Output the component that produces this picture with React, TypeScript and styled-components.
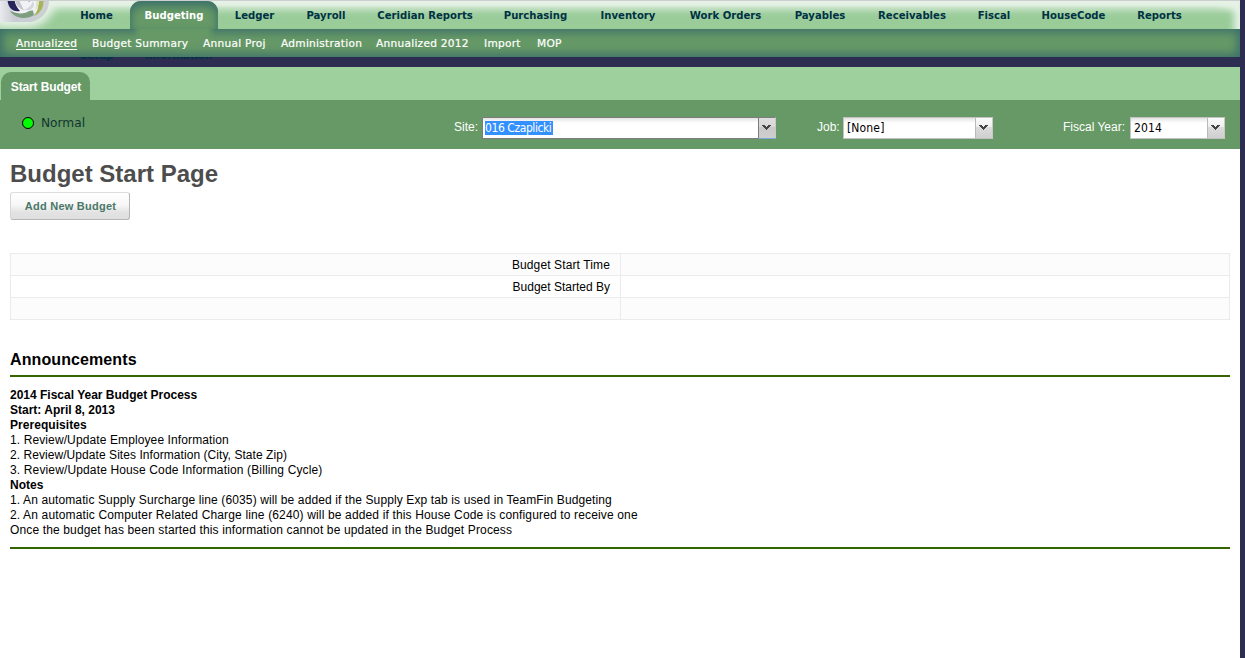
import React from "react";
import styled, { createGlobalStyle, css } from "styled-components";

const GlobalStyle = createGlobalStyle`
  * { box-sizing: border-box; }
  body { margin: 0; background: #fff; font-family: "Liberation Sans", Arial, sans-serif; font-size: 12px; color: #000; overflow: hidden; }
  svg { display: block; }
`;

const Shell = styled.div`
  width: 100%;
  height: 658px;
  padding-right: 5px;
  background: #2c2d50;
`;
const Page = styled.div`
  height: 100%;
  background: #fff;
`;

const TopNav = styled.nav`
  position: relative;
  display: flex;
  height: 29px;
  padding-left: 64px;
  overflow: hidden;
  border-top: 1px solid #cbcfd0;
  background: linear-gradient(#e6f2e6 0, #e2f0e2 4px, #bcddbc 8px, #9fcf9f 13px, #99cc99 17px);
`;
const RightGlow = styled.div`
  position: absolute;
  right: 0;
  top: 0;
  width: 34px;
  height: 60px;
  border-top-right-radius: 9px;
  box-shadow: inset -5px 4px 7px 1px #e6f2e6, 0 0 0 8px #eef0f2;
  clip-path: inset(0);
  mask-image: linear-gradient(90deg, transparent 8px, #000 20px);
`;
const LogoPanel = styled.div`
  position: absolute;
  left: 0;
  top: -1px;
  width: 49px;
  height: 22px;
  border-bottom-right-radius: 22px 21px;
  background: linear-gradient(90deg, #e8eaee 0, #c9ccd2 14px, #cdd0d5);
  box-shadow: 0 0 8px 6px #e6f2e6;
`;
const navFont = css`
  font-family: "DejaVu Sans", Verdana, sans-serif;
  font-weight: bold;
  font-size: 10.1px;
  white-space: nowrap;
`;
const NavItem = styled.a<{ $w: number; $active?: boolean }>`
  ${navFont}
  position: relative;
  display: flex;
  justify-content: center;
  flex: none;
  width: ${(p) => p.$w + 32}px;
  height: 29px;
  line-height: 29px;
  color: #003144;
  ${(p) =>
    p.$active &&
    css`
      color: #fff;
      width: ${p.$w + 30}px;
      margin: 0 1px;
      border-radius: 11px 11px 0 0;
      background: #669966;
      box-shadow: inset 0 4px 9px 1px #3c706a;
    `}
`;

const SubNav = styled.nav`
  position: relative;
  display: flex;
  gap: 15px;
  height: 28px;
  padding-left: 16px;
  background: #669966;
  box-shadow: inset 0 0 10px 3px #3c706a;
`;
const Junction = styled.div`
  position: absolute;
  left: 132px;
  top: 0;
  width: 84px;
  height: 14px;
  background: #669966;
  mask-image: linear-gradient(90deg, transparent, #000 9px, #000 75px, transparent);
`;
const SubItem = styled.a<{ $w: number; $active?: boolean }>`
  position: relative;
  display: flex;
  flex: none;
  width: ${(p) => p.$w}px;
  font-family: "DejaVu Sans", Verdana, sans-serif;
  font-size: 10.6px;
  letter-spacing: 0.26px;
  line-height: 29px;
  white-space: nowrap;
  color: #fff;
  -webkit-text-stroke: 0.2px #fff;
  text-decoration: ${(p) => (p.$active ? "underline" : "none")};
  text-underline-offset: 2px;
`;

const Strip = styled.div`
  display: flex;
  height: 10px;
  padding-left: 64px;
  overflow: hidden;
  background: #2c2d50;
`;
const WrappedItem = styled.span<{ $w: number }>`
  ${navFont}
  width: ${(p) => p.$w + 32}px;
  padding-left: 16px;
  margin-top: -7px;
  line-height: 12px;
  color: #003144;
`;

const TabBar = styled.div`
  display: flex;
  align-items: flex-end;
  height: 33px;
  padding-left: 1px;
  background: #9ed09e;
`;
const Tab = styled.div`
  width: 89px;
  height: 28px;
  padding-left: 1px;
  border-radius: 10px 10px 0 0;
  background: #669966;
  color: #fff;
  font-weight: bold;
  letter-spacing: -0.13px;
  line-height: 30px;
  text-align: center;
  white-space: nowrap;
`;
const FilterBar = styled.div`
  display: flex;
  height: 49px;
  background: #669966;
`;
const Status = styled.div`
  display: flex;
  align-items: center;
  flex: none;
  gap: 7px;
  width: 454px;
  height: 46px;
  padding-left: 22px;
  font-family: "DejaVu Sans", Verdana, sans-serif;
  font-size: 12.2px;
  color: #11352e;
`;
const Light = styled.i`
  width: 12px;
  height: 12px;
  border: 1px solid #000;
  border-radius: 50%;
  background: #00ff00;
`;
const Field = styled.label<{ $label: number; $gap: number }>`
  display: grid;
  grid-template-columns: ${(p) => p.$label}px auto;
  align-items: start;
  flex: none;
  margin-right: ${(p) => p.$gap}px;
  padding-top: 17px;
  line-height: 20px;
  color: #fff;
  white-space: nowrap;
`;
const Select = styled.span<{ $w: number; $focus?: boolean }>`
  display: flex;
  width: ${(p) => p.$w}px;
  height: 22px;
  border: 1px solid ${(p) => (p.$focus ? "#7c7c7c" : "#c2c2c2")};
  border-right-color: #c9c9c9;
  background: linear-gradient(#e4e4e4, #fff 5px);
`;
const Value = styled.span<{ $sel?: boolean }>`
  flex: 1;
  padding: 3px 0 0 ${(p) => (p.$sel ? 2 : 3)}px;
  font-family: "DejaVu Sans Condensed", "DejaVu Sans", Tahoma, sans-serif;
  font-stretch: condensed;
  font-size: 12px;
  line-height: 14px;
  letter-spacing: 0.15px;
  color: #000;
  span {
    display: inline-block;
    ${(p) => p.$sel && "background: #3390ff; color: #fff; width: 68px; letter-spacing: -0.42px;"}
  }
`;
const Trigger = styled.span<{ $focus?: boolean }>`
  display: flex;
  align-items: center;
  justify-content: center;
  width: 17px;
  padding-right: 2px;
  padding-bottom: 1px;
  margin: ${(p) => (p.$focus ? "0 0 -1px" : "0")};
  border-left: 1px solid ${(p) => (p.$focus ? "#7c7c7c" : "#b9b9b9")};
  border-bottom: ${(p) => (p.$focus ? "1px solid #7fa6d8" : "0")};
  background: ${(p) =>
    p.$focus
      ? "linear-gradient(#dedede, #d8d8d8 45%, #c8c8c8 46%, #cfcfcf)"
      : "linear-gradient(#fafafa, #eeeeee 45%, #dcdcdc 46%, #cfcfcf)"};
`;

const Content = styled.main`
  padding: 10px 10px 0;
`;
const Title = styled.h1`
  margin: 0;
  font-size: 24px;
  line-height: 29px;
  color: #4d4d4d;
`;
const Button = styled.button`
  display: block;
  width: 120px;
  height: 28px;
  margin-top: 4px;
  padding: 0;
  border: 1px solid #b5b5b5;
  border-top-color: #dddddd;
  border-left-color: #d6d6d6;
  border-radius: 3px;
  background: linear-gradient(#fff 0, #f7f7f7 45%, #e2e2e2 75%, #e0e0e0);
  color: #4a7868;
  font: bold 11px "Liberation Sans", Arial, sans-serif;
  letter-spacing: 0.25px;
  text-indent: 1px;
  white-space: nowrap;
`;
const Table = styled.div`
  margin-top: 33px;
  border: 1px solid #ebebeb;
  border-bottom: 0;
`;
const Row = styled.div<{ $shade?: boolean }>`
  display: grid;
  grid-template-columns: 610px 1fr;
  height: 22px;
  border-bottom: 1px solid #ebebeb;
  background: ${(p) => (p.$shade ? "#fcfcfc" : "#fff")};
`;
const Label = styled.div<{ $ls?: number }>`
  padding-right: 10px;
  border-right: 1px solid #ebebeb;
  letter-spacing: ${(p) => p.$ls || 0}px;
  line-height: 22px;
  text-align: right;
`;
const Heading = styled.h2`
  margin: 29px 0 0;
  height: 28px;
  border-bottom: 2px solid #336600;
  font-size: 16px;
  letter-spacing: 0.1px;
  line-height: 22px;
`;
const Notice = styled.div`
  height: 172px;
  padding-top: 11px;
  border-bottom: 2px solid #336600;
  line-height: 15px;
`;
const Line = styled.div<{ $bold?: boolean; $ls?: number }>`
  font-weight: ${(p) => (p.$bold ? "bold" : "normal")};
  letter-spacing: ${(p) => p.$ls || 0}px;
  white-space: nowrap;
`;

const modules: [string, number][] = [
  ["Home", 33], ["Budgeting", 58], ["Ledger", 39], ["Payroll", 40], ["Ceridian Reports", 94],
  ["Purchasing", 63], ["Inventory", 58], ["Work Orders", 73], ["Payables", 52],
  ["Receivables", 68], ["Fiscal", 32], ["HouseCode", 63], ["Reports", 45],
];
const pages: [string, number][] = [
  ["Annualized", 61], ["Budget Summary", 96], ["Annual Proj", 63], ["Administration", 80],
  ["Annualized 2012", 93], ["Import", 38], ["MOP", 25],
];
const notice: [string, boolean, number][] = [
  ["2014 Fiscal Year Budget Process", true, 0],
  ["Start: April 8, 2013", true, 0],
  ["Prerequisites", true, 0.05],
  ["1. Review/Update Employee Information", false, 0.11],
  ["2. Review/Update Sites Information (City, State Zip)", false, 0.06],
  ["3. Review/Update House Code Information (Billing Cycle)", false, 0.14],
  ["Notes", true, 0],
  ["1. An automatic Supply Surcharge line (6035) will be added if the Supply Exp tab is used in TeamFin Budgeting", false, 0.12],
  ["2. An automatic Computer Related Charge line (6240) will be added if this House Code is configured to receive one", false, 0.148],
  ["Once the budget has been started this information cannot be updated in the Budget Process", false, 0.14],
];

const Logo = () => (
  <svg width="49" height="22" viewBox="0 0 49 22">
    <circle cx="25" cy="0" r="16.5" fill="#f1f2f5" />
    <path d="M7.5 0C8 7 12 12.500 20 11C17 8 15 4 14.500 0Z" fill="#25235a" />
    <path d="M15 0Q16 7 24 10.500L19 0Z" fill="#c3c6ce" />
    <path d="M27 0L29 1.500L33 0Z" fill="#25235a" />
    <path d="M23 10Q31 8 33 1Q36 7 30 10Z" fill="#d5d7dd" />
    <path d="M10 11C17 13 22 15 28 11.500Q31 10 33 10.500L34 15C27 20 15 19 10 11Z" fill="#7d9f80" />
    <path d="M37.500 0Q40 8 34 16Q44 12 43.500 0Z" fill="#a9b45a" />
    <path d="M36 0Q37 7 34 11Q40 6 39 0Z" fill="#dfe3c4" />
  </svg>
);

const Arrow = () => (
  <svg width="9" height="5" viewBox="0 0 9 5" shapeRendering="crispEdges">
    <path d="M0 0h3v1h1v1h1v-1h1v-1h3v1h-1v1h-1v1h-1v1h-1v1h-1v-1h-1v-1h-1v-1h-1v-1h-1z" fill="#444" />
  </svg>
);

function Combo({ label, labelWidth, width, value, gap, focus }: {
  label: string; labelWidth: number; width: number; value: string; gap: number; focus?: boolean;
}) {
  return (
    <Field $label={labelWidth} $gap={gap}>
      {label}
      <Select $w={width} $focus={focus}>
        <Value $sel={focus}><span>{value}</span></Value>
        <Trigger $focus={focus}><Arrow /></Trigger>
      </Select>
    </Field>
  );
}

export default function App() {
  return (
    <>
      <GlobalStyle />
      <Shell>
        <Page>
          <TopNav>
            <LogoPanel><Logo /></LogoPanel>
            <RightGlow />
            {modules.map(([name, w]) => (
              <NavItem key={name} $w={w} $active={name === "Budgeting"}>{name}</NavItem>
            ))}
          </TopNav>
          <SubNav>
            <Junction />
            {pages.map(([name, w], i) => (
              <SubItem key={name} $w={w} $active={i === 0}>{name}</SubItem>
            ))}
          </SubNav>
          <Strip>
            <WrappedItem $w={33}>Setup</WrappedItem>
            <WrappedItem $w={70}>Information</WrappedItem>
          </Strip>
          <TabBar><Tab>Start Budget</Tab></TabBar>
          <FilterBar>
            <Status><Light />Normal</Status>
            <Combo label="Site:" labelWidth={28} width={294} value="016 Czaplicki" gap={41} focus />
            <Combo label="Job:" labelWidth={26} width={150} value="[None]" gap={70} />
            <Combo label="Fiscal Year:" labelWidth={67} width={95} value="2014" gap={0} />
          </FilterBar>
          <Content>
            <Title>Budget Start Page</Title>
            <Button>Add New Budget</Button>
            <Table>
              <Row $shade><Label $ls={0.12}>Budget Start Time</Label></Row>
              <Row><Label>Budget Started By</Label></Row>
              <Row $shade><Label /></Row>
            </Table>
            <Heading>Announcements</Heading>
            <Notice>
              {notice.map(([text, bold, ls]) => (
                <Line key={text} $bold={bold} $ls={ls}>{text}</Line>
              ))}
            </Notice>
          </Content>
        </Page>
      </Shell>
    </>
  );
}
